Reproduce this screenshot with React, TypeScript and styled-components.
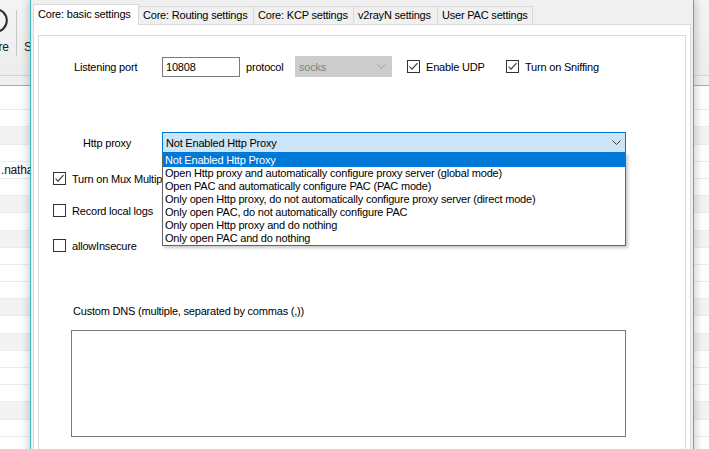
import React from "react";
import styled, { createGlobalStyle } from "styled-components";

const GlobalStyle = createGlobalStyle`
  html, body { margin: 0; padding: 0; background: #ffffff; }
  body { width: 709px; height: 449px; overflow: hidden; }
  #root { width: 709px; height: 449px; }
`;

const Desktop = styled.div`
  position: relative;
  width: 709px;
  height: 449px;
  overflow: hidden;
  font-family: "Liberation Sans", Arial, sans-serif;
  font-size: 11px;
  letter-spacing: -0.2px;
  color: #000;
`;

/* ---------- background application ---------- */
const BackApp = styled.div`
  display: flex;
  flex-direction: column;
  width: 100%;
  height: 100%;
  background: #ffffff;
`;

const Toolbar = styled.div`
  flex: none;
  height: 76px;
  box-sizing: border-box;
  display: flex;
  align-items: flex-start;
  padding-top: 8px;
  background: linear-gradient(#f4f4f4, #ededed);
  border-bottom: 1px solid #d4d4d4;
`;

const ToolButton = styled.div<{ $offset: number; $w: number }>`
  flex: none;
  width: ${(p) => p.$w}px;
  margin-left: ${(p) => p.$offset}px;
  display: flex;
  flex-direction: column;
  align-items: center;
  gap: 7px;
  white-space: nowrap;
  line-height: 14px;
  font-size: 12px;
  color: #222;
`;

const ToolIcon = styled.svg`
  display: block;
`;

const ToolSep = styled.div`
  flex: none;
  width: 1px;
  height: 46px;
  margin: 2px 0 0 3px;
  background: #c9c9c9;
`;

const HeaderBand = styled.div`
  flex: none;
  height: 10px;
  box-sizing: border-box;
  background: #f0f0f0;
  border-bottom: 1px solid #a9a9a9;
`;

const ListBody = styled.div`
  flex: 1;
  padding-top: 7px;
  display: flex;
  flex-direction: column;
`;

const ListRow = styled.div<{ $shade: boolean }>`
  flex: none;
  height: 17.2px;
  box-sizing: border-box;
  border-bottom: 1px solid #ebebeb;
  background: ${(p) => (p.$shade ? "#f3f3f3" : "#ffffff")};
  padding-left: 1px;
  line-height: 16px;
  font-size: 12px;
  white-space: nowrap;
  color: #111;
`;

/* ---------- dialog window ---------- */
const Dialog = styled.div`
  position: absolute;
  left: 30px;
  top: 0;
  width: 664px;
  height: 480px;
  box-sizing: border-box;
  background: #f0f0f0;
  border-left: 1px solid #3fb5bf;
  border-right: 1px solid #3fb5bf;
  box-shadow: 0 0 9px 1px rgba(0, 0, 0, 0.22);
  padding: 0 2px;
  display: flex;
  flex-direction: column;
  overflow: hidden;
`;

const TabStrip = styled.div`
  flex: none;
  height: 24px;
  display: flex;
  align-items: flex-end;
`;

const Tab = styled.div<{ $active?: boolean; $w: number }>`
  flex: none;
  position: relative;
  box-sizing: border-box;
  width: ${(p) => p.$w}px;
  height: ${(p) => (p.$active ? 21 : 18)}px;
  margin-bottom: ${(p) => (p.$active ? -1 : 0)}px;
  z-index: ${(p) => (p.$active ? 2 : 1)};
  background: ${(p) => (p.$active ? "#ffffff" : "#f0f0f0")};
  border: 1px solid #d9d9d9;
  border-bottom: none;
  padding: ${(p) => (p.$active ? "2px 0 0 4px" : "1px 0 0 4px")};
  line-height: 14px;
  white-space: nowrap;
  & + & {
    margin-left: -1px;
  }
`;

const TabPanel = styled.div`
  flex: 1;
  box-sizing: border-box;
  background: #ffffff;
  border: 1px solid #d9d9d9;
  padding: 10px 4px 0 4px;
  display: flex;
  flex-direction: column;
`;

const InnerPanel = styled.div`
  flex: 1;
  border: 1px solid #dadada;
  border-bottom: none;
  background: #ffffff;
  padding-top: 20px;
  display: flex;
  flex-direction: column;
`;

const FieldRow = styled.div<{ $indent: number; $top?: number }>`
  display: flex;
  align-items: center;
  padding-left: ${(p) => p.$indent}px;
  margin-top: ${(p) => p.$top ?? 0}px;
`;

const Label = styled.span<{ $w?: number; $gap?: number }>`
  flex: none;
  width: ${(p) => (p.$w ? `${p.$w}px` : "auto")};
  margin-left: ${(p) => p.$gap ?? 0}px;
  line-height: 14px;
  white-space: nowrap;
`;

const TextBox = styled.div`
  flex: none;
  box-sizing: border-box;
  width: 78px;
  height: 20px;
  border: 1px solid #7a7a7a;
  background: #fff;
  padding-left: 3px;
  line-height: 18px;
`;

const DisabledSelect = styled.div`
  flex: none;
  box-sizing: border-box;
  width: 97px;
  height: 21px;
  border: 1px solid #cccccc;
  background: #cccccc;
  color: #838383;
  padding: 0 5px 0 3px;
  display: flex;
  align-items: center;
  justify-content: space-between;
`;

const CheckItem = styled.label<{ $w?: number; $gap?: number }>`
  flex: none;
  display: flex;
  align-items: center;
  gap: 6px;
  width: ${(p) => (p.$w ? `${p.$w}px` : "auto")};
  margin-left: ${(p) => p.$gap ?? 0}px;
  line-height: 14px;
  white-space: nowrap;
`;

const CheckBoxBox = styled.span`
  flex: none;
  box-sizing: border-box;
  width: 13px;
  height: 13px;
  border: 1px solid #333333;
  background: #ffffff;
  display: flex;
  align-items: center;
  justify-content: center;
`;

const ComboWrap = styled.div`
  position: relative;
  flex: none;
  width: 464px;
  height: 21px;
  z-index: 5;
`;

const ComboBox = styled.div`
  box-sizing: border-box;
  width: 100%;
  height: 100%;
  border: 1px solid #0078d7;
  background: #cce4f7;
  padding: 0 4px 0 3px;
  display: flex;
  align-items: center;
  justify-content: space-between;
`;

const DropList = styled.ul`
  position: absolute;
  top: 100%;
  left: 0;
  width: 464px;
  box-sizing: border-box;
  margin: 0;
  padding: 0;
  list-style: none;
  background: #ffffff;
  border: 1px solid #646464;
  box-shadow: 2px 2px 3px rgba(0, 0, 0, 0.22);
`;

const DropItem = styled.li<{ $selected?: boolean }>`
  height: 13px;
  line-height: 13px;
  padding-left: 2px;
  white-space: nowrap;
  background: ${(p) => (p.$selected ? "#0078d7" : "transparent")};
  color: ${(p) => (p.$selected ? "#ffffff" : "#000000")};
`;

const CheckRow = styled.div<{ $top: number }>`
  display: flex;
  align-items: center;
  height: 13px;
  padding-left: 14px;
  margin-top: ${(p) => p.$top}px;
`;

const DnsLabel = styled.div`
  margin-top: 52px;
  padding-left: 34px;
  line-height: 14px;
  white-space: nowrap;
`;

const DnsArea = styled.div`
  flex: none;
  box-sizing: border-box;
  margin: 12px 0 0 32px;
  width: 555px;
  height: 107px;
  border: 1px solid #7a7a7a;
  background: #ffffff;
`;

const Chevron = ({ color }: { color: string }) => (
  <svg width="9" height="5" viewBox="0 0 9 5" style={{ display: "block" }}>
    <polyline points="0.5,0.5 4.5,4.5 8.5,0.5" fill="none" stroke={color} strokeWidth="1" />
  </svg>
);

const CheckBox = ({ checked }: { checked?: boolean }) => (
  <CheckBoxBox>
    {checked && (
      <svg width="11" height="11" viewBox="0 0 11 11" style={{ display: "block" }}>
        <polyline points="1.5,5.5 4,8.2 9.5,2.2" fill="none" stroke="#333" strokeWidth="1.1" />
      </svg>
    )}
  </CheckBoxBox>
);

const tabs = [
  { t: "Core: basic settings", w: 106, active: true },
  { t: "Core: Routing settings", w: 116 },
  { t: "Core: KCP settings", w: 101 },
  { t: "v2rayN settings", w: 85 },
  { t: "User PAC settings", w: 96 },
];

const proxyOptions = [
  "Not Enabled Http Proxy",
  "Open Http proxy and automatically configure proxy server (global mode)",
  "Open PAC and automatically configure PAC (PAC mode)",
  "Only open Http proxy, do not automatically configure proxy server (direct mode)",
  "Only open PAC, do not automatically configure PAC",
  "Only open Http proxy and do nothing",
  "Only open PAC and do nothing",
];

const shadedRows = new Set([2, 6, 8, 12, 14, 18]);
const rowTexts: Record<number, string> = { 4: ".nathan-server.net" };

export default function App() {
  return (
    <>
      <GlobalStyle />
      <Desktop>
        <BackApp>
          <Toolbar>
            <ToolButton $offset={-23} $w={36}>
              <ToolIcon width="25" height="25" viewBox="0 0 25 25">
                <circle cx="12.5" cy="12.5" r="11.3" fill="none" stroke="#2a2a2a" strokeWidth="2" />
              </ToolIcon>
              <span>Store</span>
            </ToolButton>
            <ToolSep />
            <ToolButton $offset={5} $w={46}>
              <ToolIcon width="25" height="25" viewBox="0 0 25 25">
                <circle cx="12.5" cy="12.5" r="11" fill="none" stroke="#2a2a2a" strokeWidth="2" />
              </ToolIcon>
              <span>Settings</span>
            </ToolButton>
          </Toolbar>
          <HeaderBand />
          <ListBody>
            {Array.from({ length: 22 }).map((_, i) => (
              <ListRow key={i} $shade={shadedRows.has(i)}>
                {rowTexts[i] ?? ""}
              </ListRow>
            ))}
          </ListBody>
        </BackApp>

        <Dialog>
          <TabStrip>
            {tabs.map((tab) => (
              <Tab key={tab.t} $w={tab.w} $active={tab.active}>
                {tab.t}
              </Tab>
            ))}
          </TabStrip>
          <TabPanel>
            <InnerPanel>
              <FieldRow $indent={35}>
                <Label $w={88}>Listening port</Label>
                <TextBox>10808</TextBox>
                <Label $w={49} $gap={6}>protocol</Label>
                <DisabledSelect>
                  <span>socks</span>
                  <Chevron color="#a3a3a3" />
                </DisabledSelect>
                <CheckItem $w={99} $gap={15}>
                  <CheckBox checked />
                  Enable UDP
                </CheckItem>
                <CheckItem>
                  <CheckBox checked />
                  Turn on Sniffing
                </CheckItem>
              </FieldRow>

              <FieldRow $indent={44} $top={55}>
                <Label $w={79}>Http proxy</Label>
                <ComboWrap>
                  <ComboBox>
                    <span>Not Enabled Http Proxy</span>
                    <Chevron color="#3c3c3c" />
                  </ComboBox>
                  <DropList>
                    {proxyOptions.map((o, i) => (
                      <DropItem key={o} $selected={i === 0}>
                        {o}
                      </DropItem>
                    ))}
                  </DropList>
                </ComboWrap>
              </FieldRow>

              <CheckRow $top={19}>
                <CheckItem>
                  <CheckBox checked />
                  Turn on Mux Multiplexing
                </CheckItem>
              </CheckRow>
              <CheckRow $top={19}>
                <CheckItem>
                  <CheckBox />
                  Record local logs
                </CheckItem>
              </CheckRow>
              <CheckRow $top={22}>
                <CheckItem>
                  <CheckBox />
                  allowInsecure
                </CheckItem>
              </CheckRow>

              <DnsLabel>Custom DNS (multiple, separated by commas (,))</DnsLabel>
              <DnsArea />
            </InnerPanel>
          </TabPanel>
        </Dialog>
      </Desktop>
    </>
  );
}
